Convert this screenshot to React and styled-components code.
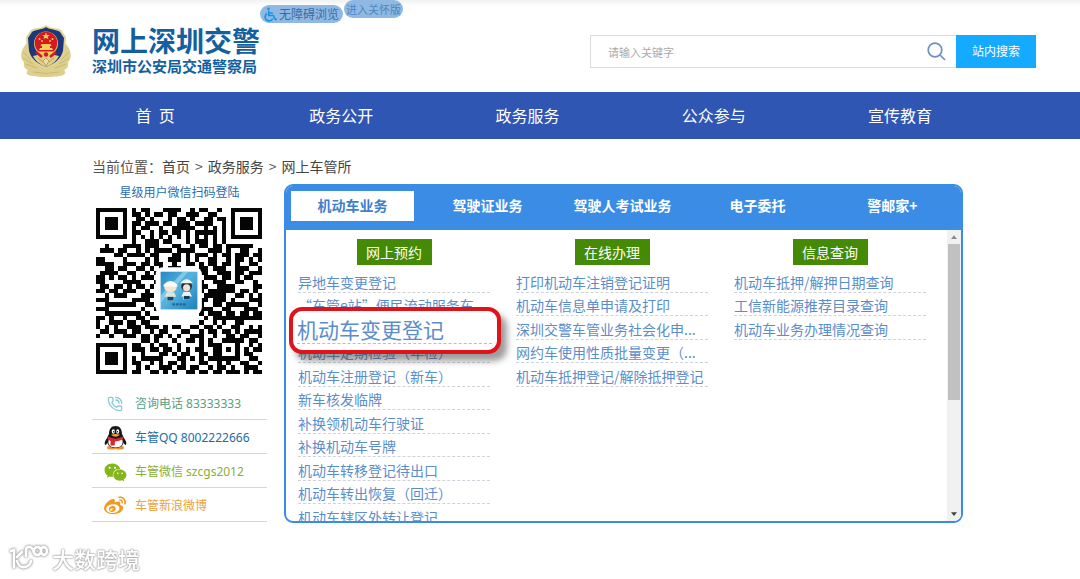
import React from "react";
import styled, { createGlobalStyle } from "styled-components";
import { FaWeixin, FaWeibo } from "react-icons/fa";
import { PhoneCall } from "lucide-react";

const Global = createGlobalStyle`
  * { box-sizing: border-box; }
  body {
    margin: 0;
    background: #fff;
    color: #555;
    font: 14px/20px "Noto Sans CJK SC", sans-serif;
  }
  a { color: inherit; text-decoration: none; }
  ul { list-style: none; margin: 0; padding: 0; }
  button, input { font-family: inherit; }
`;

const Header = styled.header`
  display: flex;
  align-items: flex-start;
  height: 92px;
  padding: 0 44px 0 20px;
  background: linear-gradient(#f1f1f2, #fff 6px);
`;

const Emblem = styled.svg`
  width: 52px;
  height: 54px;
  margin: 24px 20px 0 0;
  flex: none;
`;

const Brand = styled.div`
  margin-top: 22px;
  width: 168px;
  color: #14609f;
  font-weight: 700;
  white-space: nowrap;
`;

const BrandName = styled.h1`
  margin: 0;
  font-size: 28px;
  line-height: 36px;
`;

const BrandOrg = styled.p`
  margin: 0;
  font-size: 15px;
  line-height: 16px;
`;

const Tools = styled.div`
  display: flex;
  align-items: flex-start;
  gap: 1px;
`;

const Pill = styled.button`
  display: flex;
  align-items: center;
  justify-content: center;
  gap: 2px;
  height: 18px;
  margin-top: ${(p) => (p.$large ? "5px" : "0")};
  padding: 0 ${(p) => (p.$large ? "4px" : "2px")};
  border: 0;
  border-radius: 9px;
  background: #8fb9e3;
  color: ${(p) => (p.$large ? "#3c6c9f" : "#4d86bf")};
  font-size: ${(p) => (p.$large ? "12px" : "11px")};
  line-height: 18px;
  white-space: nowrap;
`;

const Search = styled.form`
  display: flex;
  width: 446px;
  height: 33px;
  margin: 35px 0 0 auto;
`;

const SearchField = styled.div`
  display: flex;
  flex: 1;
  align-items: center;
  padding: 0 10px 0 17px;
  border: 1px solid #dcdcdc;
  border-right: 0;
`;

const SearchInput = styled.input`
  flex: 1;
  min-width: 0;
  padding: 0;
  border: 0;
  outline: 0;
  background: none;
  color: #555;
  font-size: 11px;
  &::placeholder { color: #aaa; }
`;

const SearchButton = styled.button`
  width: 80px;
  padding: 0 0 2px;
  border: 0;
  background: #13aaff;
  color: #fff;
  font-size: 12px;
`;

const Nav = styled.nav`
  display: grid;
  grid-template-columns: repeat(5, 1fr);
  height: 47px;
  padding: 0 87px 0 62px;
  background: #2f56b2;
`;

const NavLink = styled.a`
  color: #fff;
  font-size: 16px;
  line-height: 46px;
  text-align: center;
  white-space: pre;
`;

const Page = styled.main`
  padding: 17px 117px 0 92px;
`;

const Crumbs = styled.nav`
  display: flex;
  gap: 5px;
  margin-bottom: 8px;
  span:first-child { margin-right: -5px; }
  a { color: #444; }
`;

const Columns = styled.div`
  display: flex;
  align-items: flex-start;
  gap: 17px;
`;

const Sidebar = styled.aside`
  width: 175px;
  flex: none;
`;

const ScanTitle = styled.h2`
  margin: 0 0 8px;
  color: #2c6cae;
  font-size: 12px;
  font-weight: 400;
  line-height: 16px;
  text-align: center;
`;

const QrCode = styled.svg`
  display: block;
  width: 166px;
  height: 166px;
  margin: 0 4px 12px;
`;

const Contact = styled.li`
  display: flex;
  align-items: center;
  gap: 8px;
  height: 34px;
  padding: 3px 0 0 11px;
  border-bottom: 1px solid #cbdade;
  color: ${(p) => p.$color};
  font-family: "Noto Sans", "Noto Sans CJK SC", sans-serif;
  font-size: 12px;
  white-space: nowrap;
`;

const ContactIcon = styled.span`
  display: flex;
  justify-content: center;
  width: 24px;
`;

const Panel = styled.section`
  flex: 1;
  min-width: 0;
  border: 2px solid #3b8ce4;
  border-radius: 9px;
  overflow: hidden;
`;

const Tabs = styled.div`
  display: grid;
  grid-template-columns: repeat(5, 1fr);
  height: 44px;
  padding-top: 5px;
  background: #3b8ce4;
`;

const Tab = styled.button`
  height: 30px;
  margin: 0 7px 0 5px;
  padding: 0 0 2px;
  border: 0;
  background: ${(p) => (p.$active ? "#fff" : "transparent")};
  color: ${(p) => (p.$active ? "#3f7fcb" : "#fff")};
  font-size: 14px;
  font-weight: 700;
`;

const PanelBody = styled.div`
  display: flex;
  height: 291px;
`;

const Services = styled.div`
  flex: 1;
  display: grid;
  grid-template-columns: repeat(3, minmax(0, 1fr));
  gap: 26px;
  padding: 9px 21px 0 12px;
`;

const Badge = styled.h3`
  width: 75px;
  margin: 0 auto 4px;
  background: #448a05;
  color: #fff;
  font-size: 14px;
  font-weight: 400;
  line-height: 26px;
  text-align: center;
`;

const Service = styled.li`
  position: relative;
  display: flex;
  align-items: flex-end;
  height: 24px;
  border-bottom: 1px dashed #ccd3da;
  color: #5b8dcb;
  line-height: 20px;
  &:nth-child(even) { height: 23px; }
  > a {
    overflow: hidden;
    text-overflow: ellipsis;
    white-space: nowrap;
  }
`;

const Callout = styled.div`
  position: absolute;
  z-index: 1;
  inset: -9px -11px -15px -9px;
  padding: 4px 5px;
  border: 4px solid #e0131a;
  border-radius: 13px;
  background: #fff;
  box-shadow: 6px 7px 6px rgba(60, 60, 60, 0.5);
  a {
    display: block;
    height: 29px;
    border-bottom: 1px dashed #dfb0a6;
    font-size: 21px;
    line-height: 28px;
    margin-left: -1px;
    white-space: nowrap;
  }
`;

const Scrollbar = styled.div`
  display: flex;
  flex-direction: column;
  align-items: center;
  width: 14px;
  padding: 5px 1px;
  background: #f1f1f1;
`;

const Thumb = styled.div`
  width: 12px;
  height: 156px;
  margin: 5px 0 auto;
  background: #c1c1c1;
`;

const Arrow = styled.svg`
  width: 6px;
  height: 4px;
  flex: none;
`;

const Watermark = styled.div`
  position: fixed;
  left: 8px;
  bottom: 4px;
  display: flex;
  align-items: center;
  gap: 4px;
  color: #fff;
  font-size: 22px;
  font-weight: 500;
  line-height: 34px;
  text-shadow: 0 0 2px #999, 0 0 2px #aaa, 0 0 1px #aaa;
  svg { filter: drop-shadow(0 0 1px #999) drop-shadow(0 0 1px #bbb); }
`;

const FINDER = ["1111111", "1000001", "1011101", "1011101", "1011101", "1000001", "1111111"];

const TOP = [
  "101100011110010110010",
  "110101101100111001100",
  "011010001011010011011",
  "110111011011101111001",
  "101100100111110010101",
  "110010110110101111101",
  "101010101010101010101",
];

const MIDDLE = [
  "0000000010011101100010111010100000000",
  "0010001111011100011001011011011111100",
  "0111011001010111101111000111010011001",
  "0000110111101100011010111010110111011",
  "1100001000010100111010100110010110101",
  "1111001110110110010011010110110100110",
  "0011011001101010111000011011100111001",
  "0111100110010101000110111001110110111",
  "1101011010111000000000001110110101100",
  "1100001111000100000000010011100110010",
  "0110110101101000000000011001111000011",
  "1101101110010000000000010111111011010",
  "0010111000111000000000001111100110101",
  "1110000011110000000000011011101000111",
  "0011111110011000000000010011011111001",
  "1110000000100100000000011100110001110",
  "0011111111010000000000010111011011011",
  "1101001001101100000000001011111111111",
  "1001110110110000000000010010100110000",
  "1010100111011101011001101101001100101",
  "0110111011001011000110010110110101111",
  "1001001110110110101001110010011011001",
];

const BOTTOM = [
  "00110100010011010100111110110",
  "11001011001000010111000100101",
  "11101101101010110011010101011",
  "00100011010110011011000101100",
  "10111110001101010111111100110",
  "11001010110100011001010011001",
  "01010011101101100101101001110",
  "11001101010011011011011101011",
];

const rows = [
  ...TOP.map((mid, i) => `${FINDER[i]}0${mid}0${FINDER[i]}`),
  ...MIDDLE,
  `00000000${BOTTOM[0]}`,
  ...BOTTOM.slice(1).map((rest, i) => `${FINDER[i]}0${rest}`),
];

const qrPath = rows
  .map((row, y) => [...row].map((bit, x) => (bit === "1" ? `M${x} ${y}h1v1h-1z` : "")).join(""))
  .join("");

function Qr() {
  return (
    <QrCode viewBox="0 0 37 37" role="img" aria-label="微信二维码">
      <path d={qrPath} shapeRendering="crispEdges" fill="#050505" />
      <rect x="13.3" y="13.2" width="10.3" height="10.6" rx="1.6" fill="#fff" />
      <defs>
        <linearGradient id="sky" x1="0" y1="0" x2="1" y2="1">
          <stop offset="0" stopColor="#2486c4" />
          <stop offset=".45" stopColor="#55b4df" />
          <stop offset="1" stopColor="#1d7fbd" />
        </linearGradient>
      </defs>
      <rect x="14.4" y="14.2" width="8.2" height="8.4" fill="url(#sky)" />
      <path d="M14.4 19.5l5-5.3h1.2l-6.2 7z" fill="#a4dcf2" opacity=".6" />
      <g>
        <ellipse cx="16.6" cy="17.6" rx="1.4" ry="1.2" fill="#f3e5cf" />
        <path d="M15.2 17q1.4-1.5 2.8 0l.2.5h-3.2z" fill="#fff" />
        <path d="M15.8 18.8h1.6l.5 1h-.5v.8h-1.6v-.8h-.5z" fill="#dce6dd" />
        <path d="M15.9 19.8h1.4v.8h-1.4z" fill="#1c4664" />
        <ellipse cx="20.2" cy="17.4" rx="1.2" ry="1.2" fill="#26313c" />
        <ellipse cx="20.2" cy="17.8" rx=".8" ry=".8" fill="#f5dfd2" />
        <path d="M18.8 16.8q1.4-1.8 2.8 0z" fill="#eef8fd" />
        <path d="M19.5 18.7h1.4l.5 1h-.5v.8h-1.4v-.8h-.5z" fill="#eef3f5" />
        <path d="M19.6 19.6h1.3v.8h-1.3z" fill="#173d5b" />
      </g>
      <path d="M17 21.5h3" stroke="#236894" strokeWidth=".5" strokeDasharray=".6 .2" />
    </QrCode>
  );
}

function PoliceEmblem() {
  return (
    <Emblem viewBox="0 0 52 54" role="img" aria-label="警徽">
      <path d="M6 20C0 27 0 35 4 38c-1 4 1 7 4 8-5 5 4 7 18 7s23-2 18-7c3-1 5-4 4-8 4-3 4-11-2-18z" fill="#ddcf8c" />
      <path d="M3 28l8 8M3 34l10 6M6 40l11 4M49 28l-8 8M49 34l-10 6M46 40l-11 4M13 48q13 3 26 0" stroke="#c3b26a" strokeWidth=".8" fill="none" />
      <path d="M26 1c4 4 10 2 15 5l5 7-1 15c-2 9-11 14-19 17C18 42 9 37 7 28L6 13l5-7C16 3 22 5 26 1z" fill="#e2d193" />
      <path d="M26 3c4 3 10 2 14 5l4 6-1 13c-2 8-9 13-17 16C18 40 11 35 9 27L8 14l4-6c4-3 10-2 14-5z" fill="#1b397a" />
      <path d="M13 32q13-4 26 0-3 7-13 11-10-4-13-11z" fill="#decf8b" />
      <path d="M26 34l3 3-3 5-3-5zM18 34l5 4M34 34l-5 4" stroke="#baa55c" fill="#eee0a4" />
      <circle cx="26" cy="19.500" r="12" fill="#e5c168" />
      <circle cx="26" cy="19" r="11.200" fill="#d51920" />
      <path d="M26 8.500l1 2.600h2.700l-2.100 1.600.8 2.600-2.400-1.500-2.400 1.500.8-2.600-2.100-1.600H25z" fill="#f3cf59" />
      <g fill="#f3cf59">
        <circle cx="19.500" cy="15" r="1" />
        <circle cx="22" cy="17" r=".9" />
        <circle cx="30" cy="17" r=".9" />
        <circle cx="32.500" cy="15" r="1" />
        <path d="M21.500 20h9l1 2h-11zM22 22h8v2h2l1 2H19l1-2h2z" />
        <path d="M17 27.500h18l-3 3H20z" />
      </g>
      <path d="M16 28l6 5M36 28l-6 5" stroke="#d51920" strokeWidth="2.500" />
      <circle cx="26" cy="30.500" r="2.200" fill="#d51920" />
    </Emblem>
  );
}

function Wheelchair() {
  return (
    <svg width="13" height="15" viewBox="0 0 13 15" fill="none" stroke="#1494e0" strokeWidth="1.600" aria-hidden="true">
      <circle cx="4.500" cy="1.800" r="1.300" fill="#1494e0" stroke="none" />
      <path d="M4.700 3.500v5h4.600l2 4 1.500-.6M5 6h3.800M3 6.500a4 4 0 1 0 5.800 5" />
    </svg>
  );
}

function Penguin() {
  return (
    <svg width="23" height="24" viewBox="0 0 23 24" aria-hidden="true">
      <ellipse cx="7.500" cy="21.700" rx="4.500" ry="1.900" fill="#e9942a" />
      <ellipse cx="15.500" cy="21.700" rx="4.500" ry="1.900" fill="#e9942a" />
      <path d="M4 11C1 14 0 17 1 19c1 0 2-1 3-3zM19 11c3 3 4 6 3 8-1 0-2-1-3-3z" fill="#17191d" />
      <path d="M11.500 0C7 0 5 3.500 5 8c-2 3-2.500 6-1.500 9 1 3.500 4 5 8 5s7-1.500 8-5c1-3 .5-6-1.500-9 0-4.500-2-8-6.500-8z" fill="#17191d" />
      <path d="M5 13h13c2 5-1 8.500-6.500 8.500S3 18 5 13z" fill="#fff" />
      <ellipse cx="9.300" cy="5.500" rx="1.500" ry="2.200" fill="#fff" />
      <ellipse cx="13.700" cy="5.500" rx="1.500" ry="2.200" fill="#fff" />
      <circle cx="9.700" cy="5.800" r=".7" fill="#111" />
      <circle cx="13.300" cy="5.800" r=".7" fill="#111" />
      <path d="M7 8.700q4.500-1.600 9 0-4.500 4-9 0z" fill="#eda42d" />
      <path d="M4.300 10.500q7 4.300 14.400 0l.7 2.600q-4 2.400-8.400 2.400l-.4 4H6.400l.2-4.500q-1.500-.6-3-1.900z" fill="#da272e" />
    </svg>
  );
}

const contacts = [
  { text: "咨询电话 83333333", color: "#55a184", icon: <PhoneCall size={16} strokeWidth={2} color="#86cbd6" /> },
  { text: "车管QQ 8002222666", color: "#1d6ca6", icon: <Penguin /> },
  { text: "车管微信 szcgs2012", color: "#8aae35", icon: <FaWeixin size={23} color="#83b51d" /> },
  { text: "车管新浪微博", color: "#eba23a", icon: <FaWeibo size={22} color="#f09a22" /> },
];

const groups = [
  {
    title: "网上预约",
    items: [
      "异地车变更登记",
      "“车管e站”便民流动服务车",
      "机动车变更登记",
      "机动车定期检验（年检）",
      "机动车注册登记（新车）",
      "新车核发临牌",
      "补换领机动车行驶证",
      "补换机动车号牌",
      "机动车转移登记待出口",
      "机动车转出恢复（回迁）",
      "机动车辖区外转让登记",
    ],
    highlighted: 2,
  },
  {
    title: "在线办理",
    items: [
      "打印机动车注销登记证明",
      "机动车信息单申请及打印",
      "深圳交警车管业务社会化申...",
      "网约车使用性质批量变更（...",
      "机动车抵押登记/解除抵押登记",
    ],
  },
  {
    title: "信息查询",
    items: ["机动车抵押/解押日期查询", "工信新能源推荐目录查询", "机动车业务办理情况查询"],
  },
];

const navItems = ["首  页", "政务公开", "政务服务", "公众参与", "宣传教育"];
const tabItems = ["机动车业务", "驾驶证业务", "驾驶人考试业务", "电子委托", "警邮家+"];

export default function App() {
  return (
    <>
      <Global />
      <Header>
        <PoliceEmblem />
        <Brand>
          <BrandName>网上深圳交警</BrandName>
          <BrandOrg>深圳市公安局交通警察局</BrandOrg>
        </Brand>
        <Tools>
          <Pill type="button" $large>
            <Wheelchair />
            无障碍浏览
          </Pill>
          <Pill type="button">进入关怀版</Pill>
        </Tools>
        <Search onSubmit={(e) => e.preventDefault()}>
          <SearchField>
            <SearchInput type="text" placeholder="请输入关键字" aria-label="请输入关键字" />
            <svg width="19" height="19" viewBox="0 0 19 19" fill="none" stroke="#6e8fc9" strokeWidth="1.700" aria-hidden="true">
              <circle cx="8" cy="8" r="6.800" />
              <path d="M13 13l5 5" />
            </svg>
          </SearchField>
          <SearchButton type="submit">站内搜索</SearchButton>
        </Search>
      </Header>
      <Nav>
        {navItems.map((item) => (
          <NavLink href="#" key={item}>{item}</NavLink>
        ))}
      </Nav>
      <Page>
        <Crumbs>
          <span>当前位置：</span>
          <a href="#">首页</a>
          <span>&gt;</span>
          <a href="#">政务服务</a>
          <span>&gt;</span>
          <a href="#">网上车管所</a>
        </Crumbs>
        <Columns>
          <Sidebar>
            <ScanTitle>星级用户微信扫码登陆</ScanTitle>
            <Qr />
            <ul>
              {contacts.map((c) => (
                <Contact key={c.text} $color={c.color}>
                  <ContactIcon>{c.icon}</ContactIcon>
                  {c.text}
                </Contact>
              ))}
            </ul>
          </Sidebar>
          <Panel>
            <Tabs>
              {tabItems.map((tab, i) => (
                <Tab type="button" key={tab} $active={i === 0}>{tab}</Tab>
              ))}
            </Tabs>
            <PanelBody>
              <Services>
                {groups.map((group) => (
                  <div key={group.title}>
                    <Badge>{group.title}</Badge>
                    <ul>
                      {group.items.map((item, i) => (
                        <Service key={item}>
                          {i === group.highlighted ? (
                            <Callout><a href="#">{item}</a></Callout>
                          ) : (
                            <a href="#">{item}</a>
                          )}
                        </Service>
                      ))}
                    </ul>
                  </div>
                ))}
              </Services>
              <Scrollbar aria-hidden="true">
                <Arrow viewBox="0 0 8 5"><path d="M4 0l4 5H0z" fill="#8b8b8b" /></Arrow>
                <Thumb />
                <Arrow viewBox="0 0 8 5"><path d="M0 0h8L4 5z" fill="#444" /></Arrow>
              </Scrollbar>
            </PanelBody>
          </Panel>
        </Columns>
      </Page>
      <Watermark>
        <svg width="40" height="30" viewBox="0 0 40 30" fill="none" stroke="#fff" strokeWidth="2.500" strokeLinecap="round" aria-hidden="true">
          <path d="M3 8l3-1v17M14 9l-5 5M9 18q2 7 8 6 5-1 6-6" />
          <path d="M18 13V7q0-3 3-3t4 3q1 5 5 5 3-1 3-4t-3-4q-4 0-4 4M33 8q0-4 3-4 3 1 3 4t-3 4q-3-1-3-4" />
        </svg>
        大数跨境
      </Watermark>
    </>
  );
}
